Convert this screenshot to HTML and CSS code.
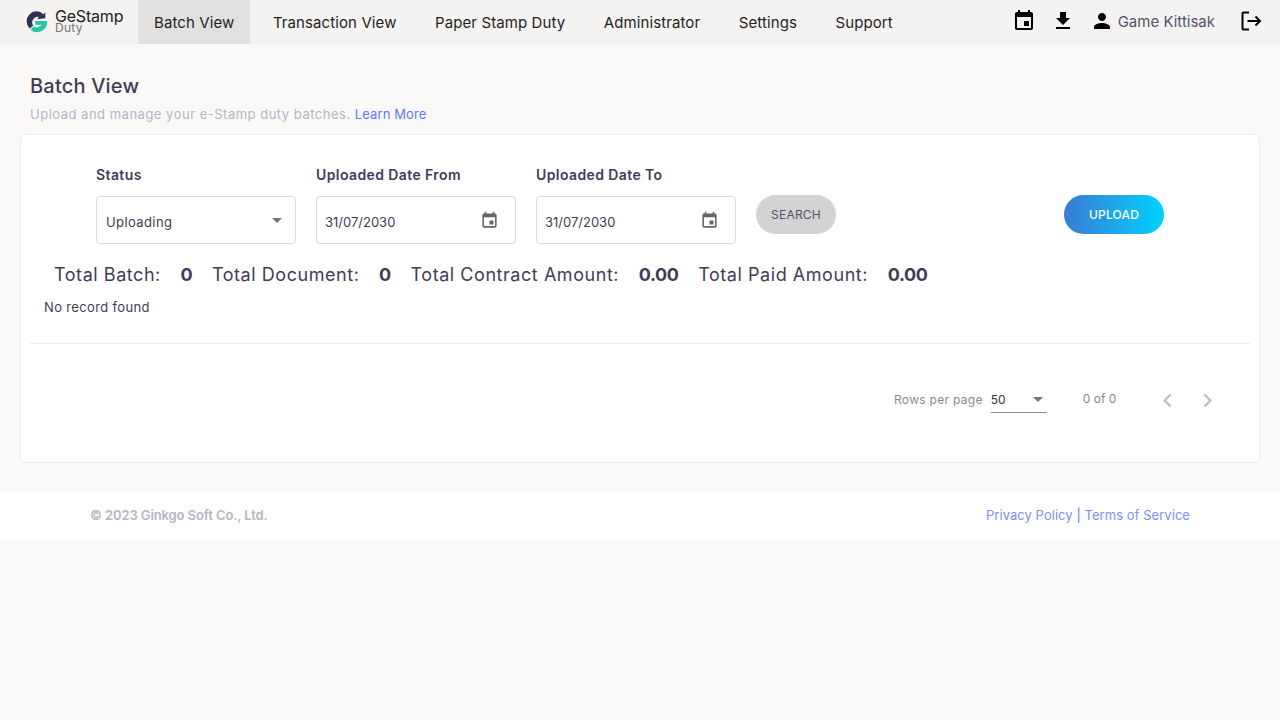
FILE: index.html
```html
<!DOCTYPE html>
<html lang="en">
<head>
  <meta charset="UTF-8">
  <title>Batch View</title>
  <link rel="stylesheet" href="styles.css">
</head>
<body>

  <nav class="topbar">
    <a class="logo" href="#">
      <svg width="24" height="26" viewBox="0 0 26 26">
        <path d="M20 4.5 A10 10 0 1 0 5 20 L9 17 A6 6 0 0 1 15 7.5 L13 10 L22 9 L22 2.5 Z" fill="#2f3350"/>
        <path d="M11 12 H24 A11 11 0 0 1 6 21.5 L9.5 18 A6.5 6.5 0 0 0 18 16 H11 Z" fill="#25c9a6"/>
      </svg>
      <span class="logo-text">
        <span class="logo-name">GeStamp</span>
        <span class="logo-sub">Duty</span>
      </span>
    </a>
    <div class="menu">
      <a class="menu-item active" href="#">Batch View</a>
      <a class="menu-item" href="#">Transaction View</a>
      <a class="menu-item" href="#">Paper Stamp Duty</a>
      <a class="menu-item" href="#">Administrator</a>
      <a class="menu-item" href="#">Settings</a>
      <a class="menu-item" href="#">Support</a>
    </div>
    <div class="tools">
      <svg class="tool-calendar" width="24" height="24" viewBox="0 0 24 24"><path d="M17 12h-5v5h5v-5zM16 1v2H8V1H6v2H5c-1.11 0-1.99.9-1.99 2L3 19c0 1.1.89 2 2 2h14c1.1 0 2-.9 2-2V5c0-1.1-.9-2-2-2h-1V1h-2zm3 18H5V8h14v11z"/></svg>
      <svg class="tool-download" width="24" height="24" viewBox="0 0 24 24"><path d="M19 9h-4V3H9v6H5l7 7 7-7zM5 18v2h14v-2H5z"/></svg>
      <svg class="tool-user" width="24" height="24" viewBox="0 0 24 24"><path d="M12 12c2.21 0 4-1.79 4-4s-1.79-4-4-4-4 1.79-4 4 1.79 4 4 4zm0 2c-2.67 0-8 1.34-8 4v2h16v-2c0-2.66-5.33-4-8-4z"/></svg>
      <span class="user-name">Game Kittisak</span>
      <svg class="tool-logout" width="24" height="24" viewBox="0 0 24 24" fill="none" stroke="#000" stroke-width="2"><path d="M10 3.5H4.5a1 1 0 0 0-1 1v15a1 1 0 0 0 1 1H10"/><path d="M8.5 12H21M16.5 7.5 21 12l-4.5 4.5"/></svg>
    </div>
  </nav>

  <main class="content">
    <h1 class="page-title">Batch View</h1>
    <p class="page-sub">Upload and manage your e-Stamp duty batches. <a href="#">Learn More</a></p>

    <section class="card">
      <div class="filters">
        <div class="field">
          <label class="field-label">Status</label>
          <div class="input-box">
            <span class="select-value">Uploading</span>
            <span class="caret"></span>
          </div>
        </div>
        <div class="field">
          <label class="field-label">Uploaded Date From</label>
          <div class="input-box date">
            <span class="date-value">31/07/2030</span>
            <svg width="19" height="19" viewBox="0 0 24 24" fill="#666"><path d="M17 12h-5v5h5v-5zM16 1v2H8V1H6v2H5c-1.11 0-1.99.9-1.99 2L3 19c0 1.1.89 2 2 2h14c1.1 0 2-.9 2-2V5c0-1.1-.9-2-2-2h-1V1h-2zm3 18H5V8h14v11z"/></svg>
          </div>
        </div>
        <div class="field">
          <label class="field-label">Uploaded Date To</label>
          <div class="input-box date">
            <span class="date-value">31/07/2030</span>
            <svg width="19" height="19" viewBox="0 0 24 24" fill="#666"><path d="M17 12h-5v5h5v-5zM16 1v2H8V1H6v2H5c-1.11 0-1.99.9-1.99 2L3 19c0 1.1.89 2 2 2h14c1.1 0 2-.9 2-2V5c0-1.1-.9-2-2-2h-1V1h-2zm3 18H5V8h14v11z"/></svg>
          </div>
        </div>
        <button class="btn btn-search">SEARCH</button>
        <button class="btn btn-upload">UPLOAD</button>
      </div>

      <div class="totals">
        <span class="total-label">Total Batch:</span><b class="total-value">0</b>
        <span class="total-label">Total Document:</span><b class="total-value">0</b>
        <span class="total-label">Total Contract Amount:</span><b class="total-value">0.00</b>
        <span class="total-label">Total Paid Amount:</span><b class="total-value">0.00</b>
      </div>

      <p class="no-record">No record found</p>

      <div class="pagination">
        <span class="rows-label">Rows per page</span>
        <div class="rows-select">
          <span>50</span>
          <span class="caret"></span>
        </div>
        <span class="page-range">0 of 0</span>
        <svg class="page-arrow" width="27" height="27" viewBox="0 0 24 24" fill="#bdbdbd"><path d="M15.41 7.41 14 6l-6 6 6 6 1.41-1.41L10.83 12z"/></svg>
        <svg class="page-arrow" width="27" height="27" viewBox="0 0 24 24" fill="#bdbdbd"><path d="M10 6 8.59 7.41 13.17 12l-4.58 4.59L10 18l6-6z"/></svg>
      </div>
    </section>
  </main>

  <footer class="footer">
    <span class="copyright">© 2023 Ginkgo Soft Co., Ltd.</span>
    <span class="footer-links"><a href="#">Privacy Policy</a> | <a href="#">Terms of Service</a></span>
  </footer>

</body>
</html>
```

FILE: styles.css
```css
* {
  box-sizing: border-box;
}

body {
  margin: 0;
  height: 720px;
  background-color: #faf9f7;
  color: #3f3d56;
  font-family: Inter, "Noto Sans", sans-serif;
  overflow: hidden;
}

a {
  text-decoration: none;
}

.topbar {
  display: flex;
  align-items: stretch;
  height: 44px;
  background-color: #f4f3f1;
}

.logo {
  display: flex;
  align-items: center;
  gap: 6px;
  width: 138px;
  padding-left: 25px;
  color: #222;
}

.logo-text {
  display: flex;
  flex-direction: column;
  line-height: 12px;
}

.logo-name {
  font-size: 16px;
  letter-spacing: -0.2px;
}

.logo-sub {
  font-size: 12px;
  letter-spacing: 0.3px;
  color: #777;
}

.menu {
  display: flex;
  gap: 6.5px;
}

.menu-item {
  display: flex;
  align-items: center;
  padding: 0 16px;
  font-size: 15px;
  letter-spacing: 0.1px;
  color: #1f1f1f;
}

.menu-item.active {
  background-color: #e2e1df;
}

.tools {
  display: flex;
  align-items: center;
  margin-left: auto;
  padding-right: 17px;
  padding-bottom: 2px;
}

.tool-download {
  margin-left: 15px;
}

.tool-user {
  margin-left: 15px;
}

.user-name {
  margin-left: 4px;
  font-size: 15px;
  color: #55536b;
}

.tool-logout {
  margin-left: 24px;
}

.content {
  padding: 29px 20px 30px;
}

.page-title {
  margin: 0;
  padding-left: 10px;
  font-size: 20px;
  line-height: 26px;
  letter-spacing: 0.2px;
  font-weight: 500;
}

.page-sub {
  margin: 5px 0 10px;
  padding-left: 10px;
  font-size: 13px;
  line-height: 20px;
  letter-spacing: 0.5px;
  color: #b5b5c3;
}

.page-sub a {
  letter-spacing: 0.1px;
  color: #5d78ff;
}

.card {
  height: 329px;
  padding: 29px 9px 0;
  background-color: #fff;
  border: 1px solid #ebedf3;
  border-radius: 6px;
}

.filters {
  display: flex;
  align-items: flex-start;
  gap: 20px;
  padding-left: 66px;
}

.field {
  width: 200px;
}

.field-label {
  display: block;
  margin-bottom: 11px;
  font-size: 14px;
  line-height: 21px;
  letter-spacing: 0.4px;
  font-weight: 600;
}

.input-box {
  display: flex;
  align-items: center;
  justify-content: space-between;
  height: 48px;
  padding: 0 9px;
  border: 1px solid #dcdcdc;
  border-radius: 4px;
  font-size: 13px;
}

.select-value {
  padding-top: 4px;
  letter-spacing: 0.4px;
}

.date-value {
  padding-top: 4px;
}

.date {
  padding-right: 16px;
  padding-left: 8px;
}

.caret {
  width: 0;
  height: 0;
  border-left: 5px solid transparent;
  border-right: 5px solid transparent;
  border-top: 5px solid #757575;
}

.input-box .caret {
  margin-right: 4px;
}

.btn {
  height: 39px;
  margin-top: 31px;
  border: 0;
  border-radius: 20px;
  font-family: inherit;
  font-size: 12px;
  letter-spacing: 0.2px;
}

.btn-search {
  width: 80px;
  background-color: #d3d3d3;
  color: #55536b;
}

.btn-upload {
  width: 100px;
  margin-left: 208px;
  background: linear-gradient(90deg, #3a7bd5, #00d2ff);
  color: #fff;
  font-weight: 500;
}

.totals {
  display: flex;
  align-items: center;
  padding-left: 24px;
  margin-top: 20px;
  font-size: 18px;
  line-height: 22px;
}

.total-label {
  letter-spacing: 0.55px;
}

.total-value {
  margin: 0 19.7px;
  letter-spacing: -0.4px;
  font-weight: 700;
}

.no-record {
  margin: 11px 0 0;
  padding-left: 14px;
  padding-bottom: 26px;
  font-size: 13px;
  line-height: 20px;
  letter-spacing: 0.35px;
  border-bottom: 1px solid #ebedf3;
}

.pagination {
  display: flex;
  align-items: center;
  margin-top: 43px;
  padding-left: 864px;
  font-size: 12px;
  color: #8a8a8a;
}

.rows-label {
  margin-bottom: 2px;
  letter-spacing: 0.3px;
}

.rows-select {
  display: flex;
  align-items: center;
  justify-content: space-between;
  width: 56px;
  height: 24px;
  margin: 0 0 0 8px;
  padding-right: 4px;
  padding-bottom: 2px;
  border-bottom: 1px solid #8a8a8a;
  color: #333;
}

.page-range {
  margin: 0 38px 4px 36px;
}

.page-arrow + .page-arrow {
  margin-left: 13px;
}

.footer {
  display: flex;
  align-items: center;
  justify-content: space-between;
  height: 46px;
  padding: 0 90px 2px;
  background-color: #fff;
  font-size: 13px;
}

.copyright {
  letter-spacing: -0.1px;
  font-weight: 600;
  color: #b5b5c3;
}

.footer-links {
  letter-spacing: 0.05px;
  color: #5d78ff;
}

.footer-links a {
  color: #7f8ff4;
}
```
